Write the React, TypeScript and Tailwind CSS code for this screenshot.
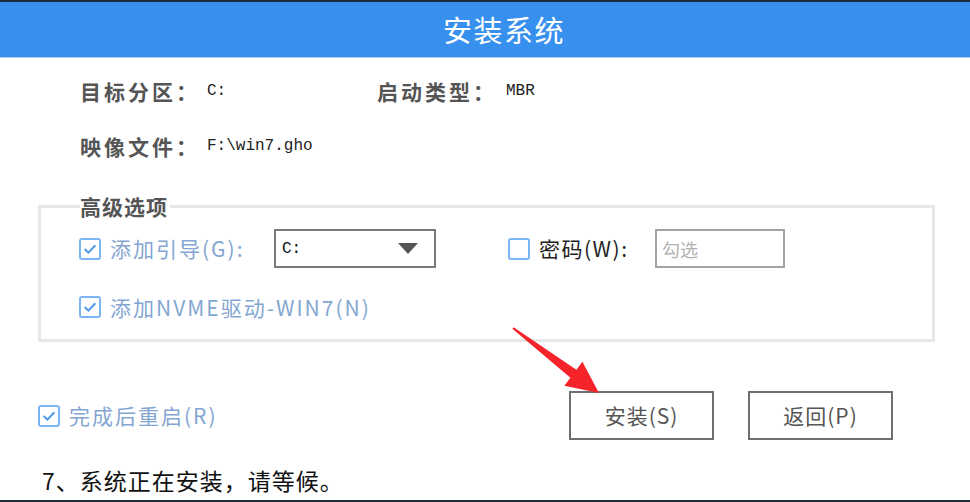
import React from "react";

const CJK = { fontFamily: '"Noto Sans CJK SC", "Noto Sans", sans-serif' };
const MONO = { fontFamily: '"Liberation Mono", "DejaVu Sans Mono", monospace' };

function Check({ checked }: { checked: boolean }) {
  return (
    <div className="w-[22px] h-[22px] border-2 border-[#7db4f3] rounded-[3px] flex items-center justify-center bg-white shrink-0">
      {checked && (
        <svg width="16" height="16" viewBox="0 0 15 15">
          <path d="M2.5 7.5 L6 11 L12.5 4" fill="none" stroke="#4d97ea" strokeWidth="1.8" />
        </svg>
      )}
    </div>
  );
}

export default function App() {
  return (
    <div className="w-[970px] h-[502px] bg-white flex flex-col relative overflow-hidden" style={CJK}>
      <div className="h-[2px] bg-[#1f2a3a]" />
      <div className="h-[56px] bg-[#3890ee] border-b border-[#a9cff5] flex items-center justify-center pl-[38px]">
        <span className="text-white text-[29px] tracking-[1.5px] leading-none">安装系统</span>
      </div>

      <div className="mt-[21px] pl-[80px] flex items-center h-[24px]">
        <div className="w-[297px] flex items-center">
          <span className="w-[127px] text-[21px] font-bold text-[#555] tracking-[3px] leading-none">目标分区：</span>
          <span className="text-[16px] text-[#222]" style={MONO}>C:</span>
        </div>
        <span className="w-[129px] text-[21px] font-bold text-[#555] tracking-[3px] leading-none">启动类型：</span>
        <span className="text-[16px] text-[#222]" style={MONO}>MBR</span>
      </div>

      <div className="mt-[31px] pl-[80px] flex items-center h-[24px]">
        <span className="w-[127px] text-[21px] font-bold text-[#555] tracking-[3px] leading-none">映像文件：</span>
        <span className="text-[16px] text-[#222]" style={MONO}>F:\win7.gho</span>
      </div>

      <div className="mt-[47px] ml-[38px] w-[897px] border-[3px] border-[#e7e7e7] relative pt-[21px] pb-[20px] pl-[38px]">
        <span className="absolute left-[39px] top-[-14px] bg-white text-[21px] font-bold text-[#555] tracking-[1px] leading-[24px] pr-[2px]">高级选项</span>
        <div className="flex items-center h-[39px]">
          <Check checked />
          <span className="ml-[9px] w-[164px] text-[21px] text-[#84a6d2] tracking-[2px] leading-none">添加引导(G):</span>
          <div className="w-[162px] h-[39px] border-2 border-[#7a7a7a] flex items-center justify-between pl-[6px] pr-[16px]">
            <span className="text-[16px] text-[#111]" style={MONO}>C:</span>
            <svg width="20" height="11" viewBox="0 0 20 11">
              <path d="M0 0 H20 L10 11 Z" fill="#555" />
            </svg>
          </div>
          <div className="ml-[72px]">
            <Check checked={false} />
          </div>
          <span className="ml-[9px] w-[116px] text-[21px] text-[#222] tracking-[1.5px] leading-none">密码(W):</span>
          <div className="w-[130px] h-[39px] border-2 border-[#a3a3a3] flex items-center pl-[5px]">
            <span className="text-[18px] text-[#b3b3b3] leading-none">勾选</span>
          </div>
        </div>
        <div className="mt-[27px] flex items-center h-[24px]">
          <Check checked />
          <span className="ml-[9px] text-[21px] text-[#84a6d2] tracking-[2px] leading-none">添加NVME驱动-WIN7(N)</span>
        </div>
      </div>

      <div className="mt-[49px] flex items-center h-[49px]">
        <div className="ml-[38px] w-[531px] flex items-center">
          <Check checked />
          <span className="ml-[9px] text-[21px] text-[#84a6d2] tracking-[2px] leading-none">完成后重启(R)</span>
        </div>
        <button className="w-[145px] h-[49px] border-2 border-[#6f6f6f] flex items-center justify-center text-[21px] tracking-[1px] text-[#555] bg-white">
          安装(S)
        </button>
        <button className="ml-[34px] w-[145px] h-[49px] border-2 border-[#6f6f6f] flex items-center justify-center text-[21px] tracking-[1px] text-[#555] bg-white">
          返回(P)
        </button>
      </div>

      <div className="mt-[25px] pl-[42px] h-[30px] flex items-center">
        <span className="text-[23px] text-[#111] tracking-[1px] leading-none">7、系统正在安装，请等候。</span>
      </div>

      <div className="mt-auto h-[2px] bg-[#1f2a3a]" />

      <svg className="absolute left-0 top-0 pointer-events-none" width="970" height="502" viewBox="0 0 970 502">
        <polygon
          points="513.6,327.2 576.4,369.8 582.4,361.8 599,393 564.4,385.8 570.4,377.8 512.4,328.8"
          fill="#f5232a"
        />
      </svg>
    </div>
  );
}
